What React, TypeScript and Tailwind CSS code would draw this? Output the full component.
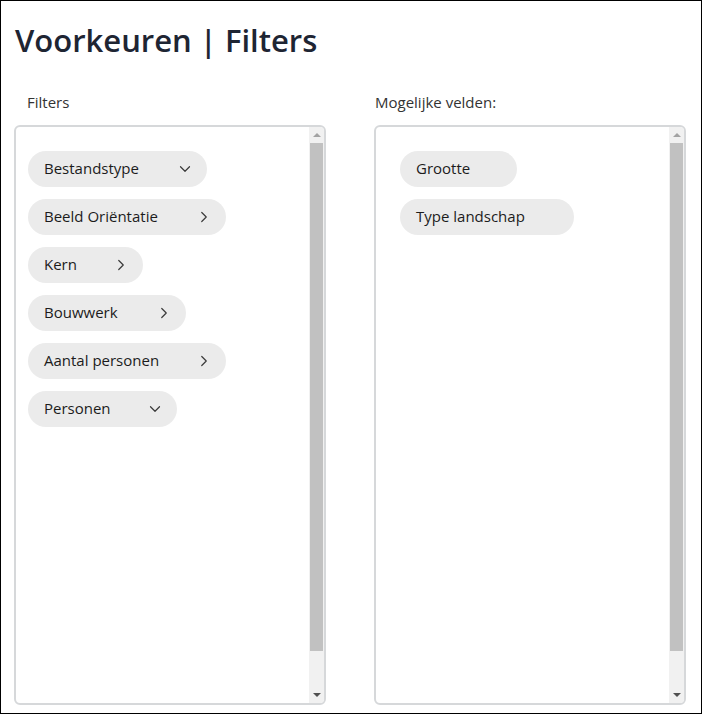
import { ChevronDown, ChevronRight } from 'lucide-react'

type Chip = { label: string, width: number, icon?: 'down' | 'right' }

const filters: Chip[] = [
  { label: 'Bestandstype', width: 179, icon: 'down' },
  { label: 'Beeld Oriëntatie', width: 198, icon: 'right' },
  { label: 'Kern', width: 115, icon: 'right' },
  { label: 'Bouwwerk', width: 158, icon: 'right' },
  { label: 'Aantal personen', width: 198, icon: 'right' },
  { label: 'Personen', width: 149, icon: 'down' },
]

const velden: Chip[] = [
  { label: 'Grootte', width: 117 },
  { label: 'Type landschap', width: 174 },
]

function FilterChip({ chip }: { chip: Chip }) {
  return (
    <div
      className="h-9 rounded-full bg-[#ebebeb] flex items-center pl-4 pr-[13px] text-[15px] font-medium text-[#1c1c1c]"
      style={{ width: chip.width }}
    >
      <span className="flex-1 whitespace-nowrap pb-[2px]">{chip.label}</span>
      {chip.icon === 'down' && <ChevronDown size={18} strokeWidth={1.6} className="text-[#3a3a3a]" />}
      {chip.icon === 'right' && <ChevronRight size={18} strokeWidth={1.6} className="text-[#3a3a3a]" />}
    </div>
  )
}

function Scrollbar() {
  return (
    <div className="w-[15px] bg-[#f1f1f1] flex flex-col items-center shrink-0">
      <div className="h-[16px] w-full flex items-center justify-center">
        <div className="w-0 h-0 border-l-[4px] border-r-[4px] border-b-[4px] border-l-transparent border-r-transparent border-b-[#a3a3a3]" />
      </div>
      <div className="w-full px-[1px] pb-[1px] flex-1 flex flex-col">
        <div className="h-[508px] bg-[#c1c1c1]" />
      </div>
      <div className="h-[16px] w-full flex items-center justify-center">
        <div className="w-0 h-0 border-l-[4px] border-r-[4px] border-t-[4px] border-l-transparent border-r-transparent border-t-[#505050]" />
      </div>
    </div>
  )
}

function Panel({ title, chips, inset, labelInset }: { title: string, chips: Chip[], inset: string, labelInset: string }) {
  return (
    <div className="w-[312px] flex flex-col">
      <p className={`text-[15px] text-[#333] h-[22px] leading-[22px] mb-[12px] ${labelInset}`}>{title}</p>
      <div className="h-[580px] border-2 border-[#d6d8da] rounded-[6px] flex overflow-hidden">
        <div className={`flex-1 pt-6 flex flex-col gap-3 ${inset}`}>
          {chips.map(c => <FilterChip key={c.label} chip={c} />)}
        </div>
        <Scrollbar />
      </div>
    </div>
  )
}

export default function App() {
  return (
    <div
      className="w-[702px] h-[714px] border border-black bg-white overflow-hidden"
      style={{ fontFamily: '"Open Sans", "Noto Sans", sans-serif' }}
    >
      <div className="pl-[13px] pt-[19px]">
        <h1 className="text-[31px] leading-[40px] font-semibold text-[#1e2533] pl-[1px]">
          Voorkeuren | Filters
        </h1>
        <div className="flex gap-12 mt-[31px]">
          <Panel title="Filters" chips={filters} inset="pl-3" labelInset="pl-[13px]" />
          <Panel title="Mogelijke velden:" chips={velden} inset="pl-6" labelInset="pl-[1px]" />
        </div>
      </div>
    </div>
  )
}
